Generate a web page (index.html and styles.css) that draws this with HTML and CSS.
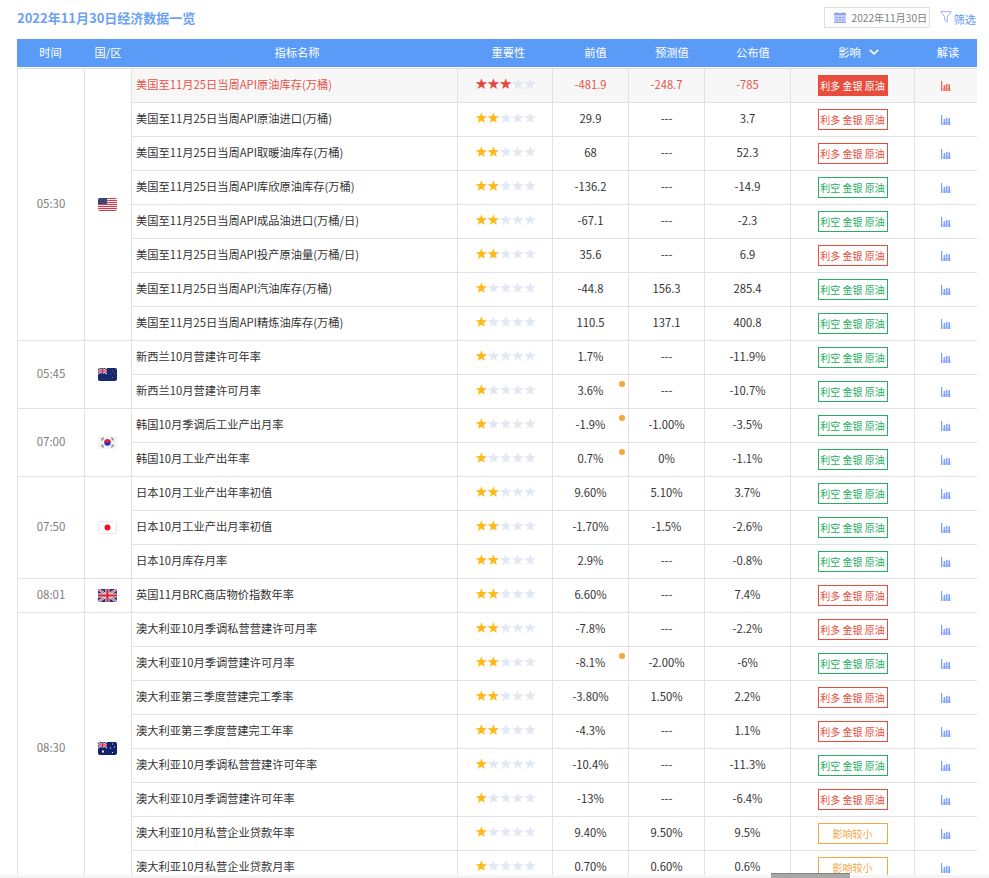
FILE: index.html
```html
<!DOCTYPE html>
<html lang="zh-CN">
<head>
    <meta charset="UTF-8">
    <title>经济数据一览</title>
    <link rel="stylesheet" href="styles.css">
</head>
<body>
<svg class="defs" width="0" height="0">
    <symbol id="chart" viewBox="0 0 10 10">
        <path d="M0 7H10V10H0Z" opacity=".35"/>
        <path d="M0 0H1.2V10H0ZM2.6 4H4.2V10H2.6ZM5 2.8H6.4V10H5ZM7.4 3.2H9V10H7.4Z"/>
    </symbol>
    <symbol id="us" viewBox="0 0 19 13">
        <rect width="19" height="13" fill="#f3e4e6"/>
        <path d="M0 .5H19M0 2.5H19M0 4.5H19M0 6.5H19M0 8.5H19M0 10.5H19M0 12.5H19" stroke="#c9404f" stroke-width="1"/>
        <rect width="9" height="6" fill="#3c4478"/>
    </symbol>
    <symbol id="nz" viewBox="0 0 19 13">
        <rect width="19" height="13" fill="#14296e"/>
        <path d="M0 0L9 6M9 0L0 6" stroke="#d9c6cf" stroke-width="1.2"/>
        <path d="M4.5 0V6M0 3H9" stroke="#d9c6cf" stroke-width="2"/>
        <path d="M4.5 0V6M0 3H9" stroke="#d1283c" stroke-width="1"/>
        <path d="M14 2.5h1v1h-1zM12 5.5h1v1h-1zM16 5h1v1h-1zM14 9h1v1h-1z" fill="#d1394a"/>
    </symbol>
    <symbol id="kr" viewBox="0 0 19 13">
        <rect width="19" height="13" fill="#f4f4f6"/>
        <path d="M3 3.5L5.5 1.5M3.5 4.5L6 2.5M13.5 1.5L16 3.5M13 2.5L15.5 4.5M3 9.5L5.5 11.5M3.5 8.5L6 10.5M13.5 11.5L16 9.5M13 10.5L15.5 8.5" stroke="#666" stroke-width=".8"/>
        <circle cx="9.5" cy="6.5" r="3.2" fill="#1f2fe0"/>
        <path d="M6.3 6.5a3.2 3.2 0 0 1 6.4 0z" fill="#e8202a"/>
    </symbol>
    <symbol id="jp" viewBox="0 0 19 13">
        <rect x=".5" y=".5" width="18" height="12" rx="1.5" fill="#fff" stroke="#e9e9ec"/>
        <circle cx="9.5" cy="6.5" r="3" fill="#f0141e"/>
    </symbol>
    <symbol id="gb" viewBox="0 0 19 13">
        <rect width="19" height="13" fill="#26307c"/>
        <path d="M0 0L19 13M19 0L0 13" stroke="#e9dfe6" stroke-width="2.4"/>
        <path d="M0 0L19 13M19 0L0 13" stroke="#d0384c" stroke-width=".9"/>
        <path d="M9.5 0V13M0 6.5H19" stroke="#f0e6ea" stroke-width="4"/>
        <path d="M9.5 0V13M0 6.5H19" stroke="#d9202e" stroke-width="2.2"/>
    </symbol>
    <symbol id="au" viewBox="0 0 19 13">
        <rect width="19" height="13" fill="#14226e"/>
        <path d="M0 0L9 6M9 0L0 6" stroke="#d9c6cf" stroke-width="1.2"/>
        <path d="M4.5 0V6M0 3H9" stroke="#d9c6cf" stroke-width="2"/>
        <path d="M4.5 0V6M0 3H9" stroke="#d1283c" stroke-width="1"/>
        <path d="M4 8.5h2v2H4zM14 1.5h1v1h-1zM16 4.5h1v1h-1zM12 5.5h1v1h-1zM14 10h1v1h-1z" fill="#e8e8f0"/>
    </symbol>
</svg>

<div class="page">
    <div class="top">
        <h1 class="title">2022年11月30日经济数据一览</h1>
        <div class="tools">
            <div class="date">
                <svg class="date-icon" viewBox="0 0 12 11"><path fill="#c3cdfa" d="M0 3H12V11H0Z"/><path fill="#8ea4f2" d="M0 1H2V0H3V1H9V0H10V1H12V3H0ZM0 10H12V11H0ZM2 5H3.5V6.2H2ZM5.2 5H6.8V6.2H5.2ZM8.5 5H10V6.2H8.5ZM2 7.6H3.5V8.8H2ZM5.2 7.6H6.8V8.8H5.2ZM8.5 7.6H10V8.8H8.5Z"/></svg>
                <span>2022年11月30日</span>
            </div>
            <div class="filter">
                <svg class="filter-icon" viewBox="0 0 12 12"><path fill="none" stroke="#a3aef5" d="M.7.7H11.3L7.3 5.6V11L4.7 9.4V5.6Z"/></svg>
                <span>筛选</span>
            </div>
        </div>
    </div>

    <div class="head">
        <div>时间</div>
        <div>国/区</div>
        <div>指标名称</div>
        <div>重要性</div>
        <div>前值</div>
        <div>预测值</div>
        <div>公布值</div>
        <div>影响<svg class="chevron" viewBox="0 0 10 6"><path d="M.8.8L5 4.8 9.2.8" fill="none" stroke="#fff" stroke-width="1.6"/></svg></div>
        <div>解读</div>
    </div>

    <table class="list">
        <colgroup>
            <col class="c-time"><col class="c-area"><col class="c-name"><col class="c-star"><col class="c-val"><col class="c-val"><col class="c-pub"><col class="c-tag"><col class="c-read">
        </colgroup>
        <tr class="hot">
            <td class="time" rowspan="8">05:30</td>
            <td class="area" rowspan="8"><svg class="flag"><use href="#us"/></svg></td>
            <td class="name">美国至11月25日当周API原油库存(万桶)</td>
            <td class="stars"><b class="red">★★★</b>★★</td>
            <td>-481.9</td><td>-248.7</td><td>-785</td>
            <td><span class="tag tag-full">利多 金银 原油</span></td>
            <td class="read"><svg class="chart chart-red"><use href="#chart"/></svg></td>
        </tr>
        <tr>
            <td class="name">美国至11月25日当周API原油进口(万桶)</td>
            <td class="stars"><b>★★</b>★★★</td>
            <td>29.9</td><td>---</td><td>3.7</td>
            <td><span class="tag tag-up">利多 金银 原油</span></td>
            <td class="read"><svg class="chart"><use href="#chart"/></svg></td>
        </tr>
        <tr>
            <td class="name">美国至11月25日当周API取暖油库存(万桶)</td>
            <td class="stars"><b>★★</b>★★★</td>
            <td>68</td><td>---</td><td>52.3</td>
            <td><span class="tag tag-up">利多 金银 原油</span></td>
            <td class="read"><svg class="chart"><use href="#chart"/></svg></td>
        </tr>
        <tr>
            <td class="name">美国至11月25日当周API库欣原油库存(万桶)</td>
            <td class="stars"><b>★★</b>★★★</td>
            <td>-136.2</td><td>---</td><td>-14.9</td>
            <td><span class="tag tag-down">利空 金银 原油</span></td>
            <td class="read"><svg class="chart"><use href="#chart"/></svg></td>
        </tr>
        <tr>
            <td class="name">美国至11月25日当周API成品油进口(万桶/日)</td>
            <td class="stars"><b>★★</b>★★★</td>
            <td>-67.1</td><td>---</td><td>-2.3</td>
            <td><span class="tag tag-down">利空 金银 原油</span></td>
            <td class="read"><svg class="chart"><use href="#chart"/></svg></td>
        </tr>
        <tr>
            <td class="name">美国至11月25日当周API投产原油量(万桶/日)</td>
            <td class="stars"><b>★★</b>★★★</td>
            <td>35.6</td><td>---</td><td>6.9</td>
            <td><span class="tag tag-up">利多 金银 原油</span></td>
            <td class="read"><svg class="chart"><use href="#chart"/></svg></td>
        </tr>
        <tr>
            <td class="name">美国至11月25日当周API汽油库存(万桶)</td>
            <td class="stars"><b>★</b>★★★★</td>
            <td>-44.8</td><td>156.3</td><td>285.4</td>
            <td><span class="tag tag-down">利空 金银 原油</span></td>
            <td class="read"><svg class="chart"><use href="#chart"/></svg></td>
        </tr>
        <tr>
            <td class="name">美国至11月25日当周API精炼油库存(万桶)</td>
            <td class="stars"><b>★</b>★★★★</td>
            <td>110.5</td><td>137.1</td><td>400.8</td>
            <td><span class="tag tag-down">利空 金银 原油</span></td>
            <td class="read"><svg class="chart"><use href="#chart"/></svg></td>
        </tr>

        <tr>
            <td class="time" rowspan="2">05:45</td>
            <td class="area" rowspan="2"><svg class="flag"><use href="#nz"/></svg></td>
            <td class="name">新西兰10月营建许可年率</td>
            <td class="stars"><b>★</b>★★★★</td>
            <td>1.7%</td><td>---</td><td>-11.9%</td>
            <td><span class="tag tag-down">利空 金银 原油</span></td>
            <td class="read"><svg class="chart"><use href="#chart"/></svg></td>
        </tr>
        <tr>
            <td class="name">新西兰10月营建许可月率</td>
            <td class="stars"><b>★</b>★★★★</td>
            <td class="revised">3.6%</td><td>---</td><td>-10.7%</td>
            <td><span class="tag tag-down">利空 金银 原油</span></td>
            <td class="read"><svg class="chart"><use href="#chart"/></svg></td>
        </tr>

        <tr>
            <td class="time" rowspan="2">07:00</td>
            <td class="area" rowspan="2"><svg class="flag"><use href="#kr"/></svg></td>
            <td class="name">韩国10月季调后工业产出月率</td>
            <td class="stars"><b>★</b>★★★★</td>
            <td class="revised">-1.9%</td><td>-1.00%</td><td>-3.5%</td>
            <td><span class="tag tag-down">利空 金银 原油</span></td>
            <td class="read"><svg class="chart"><use href="#chart"/></svg></td>
        </tr>
        <tr>
            <td class="name">韩国10月工业产出年率</td>
            <td class="stars"><b>★</b>★★★★</td>
            <td class="revised">0.7%</td><td>0%</td><td>-1.1%</td>
            <td><span class="tag tag-down">利空 金银 原油</span></td>
            <td class="read"><svg class="chart"><use href="#chart"/></svg></td>
        </tr>

        <tr>
            <td class="time" rowspan="3">07:50</td>
            <td class="area" rowspan="3"><svg class="flag"><use href="#jp"/></svg></td>
            <td class="name">日本10月工业产出年率初值</td>
            <td class="stars"><b>★★</b>★★★</td>
            <td>9.60%</td><td>5.10%</td><td>3.7%</td>
            <td><span class="tag tag-down">利空 金银 原油</span></td>
            <td class="read"><svg class="chart"><use href="#chart"/></svg></td>
        </tr>
        <tr>
            <td class="name">日本10月工业产出月率初值</td>
            <td class="stars"><b>★★</b>★★★</td>
            <td>-1.70%</td><td>-1.5%</td><td>-2.6%</td>
            <td><span class="tag tag-down">利空 金银 原油</span></td>
            <td class="read"><svg class="chart"><use href="#chart"/></svg></td>
        </tr>
        <tr>
            <td class="name">日本10月库存月率</td>
            <td class="stars"><b>★★</b>★★★</td>
            <td>2.9%</td><td>---</td><td>-0.8%</td>
            <td><span class="tag tag-down">利空 金银 原油</span></td>
            <td class="read"><svg class="chart"><use href="#chart"/></svg></td>
        </tr>

        <tr>
            <td class="time">08:01</td>
            <td class="area"><svg class="flag"><use href="#gb"/></svg></td>
            <td class="name">英国11月BRC商店物价指数年率</td>
            <td class="stars"><b>★★</b>★★★</td>
            <td>6.60%</td><td>---</td><td>7.4%</td>
            <td><span class="tag tag-up">利多 金银 原油</span></td>
            <td class="read"><svg class="chart"><use href="#chart"/></svg></td>
        </tr>

        <tr>
            <td class="time" rowspan="8">08:30</td>
            <td class="area" rowspan="8"><svg class="flag"><use href="#au"/></svg></td>
            <td class="name">澳大利亚10月季调私营营建许可月率</td>
            <td class="stars"><b>★★</b>★★★</td>
            <td>-7.8%</td><td>---</td><td>-2.2%</td>
            <td><span class="tag tag-up">利多 金银 原油</span></td>
            <td class="read"><svg class="chart"><use href="#chart"/></svg></td>
        </tr>
        <tr>
            <td class="name">澳大利亚10月季调营建许可月率</td>
            <td class="stars"><b>★★</b>★★★</td>
            <td class="revised">-8.1%</td><td>-2.00%</td><td>-6%</td>
            <td><span class="tag tag-down">利空 金银 原油</span></td>
            <td class="read"><svg class="chart"><use href="#chart"/></svg></td>
        </tr>
        <tr>
            <td class="name">澳大利亚第三季度营建完工季率</td>
            <td class="stars"><b>★★</b>★★★</td>
            <td>-3.80%</td><td>1.50%</td><td>2.2%</td>
            <td><span class="tag tag-up">利多 金银 原油</span></td>
            <td class="read"><svg class="chart"><use href="#chart"/></svg></td>
        </tr>
        <tr>
            <td class="name">澳大利亚第三季度营建完工年率</td>
            <td class="stars"><b>★★</b>★★★</td>
            <td>-4.3%</td><td>---</td><td>1.1%</td>
            <td><span class="tag tag-up">利多 金银 原油</span></td>
            <td class="read"><svg class="chart"><use href="#chart"/></svg></td>
        </tr>
        <tr>
            <td class="name">澳大利亚10月季调私营营建许可年率</td>
            <td class="stars"><b>★</b>★★★★</td>
            <td>-10.4%</td><td>---</td><td>-11.3%</td>
            <td><span class="tag tag-down">利空 金银 原油</span></td>
            <td class="read"><svg class="chart"><use href="#chart"/></svg></td>
        </tr>
        <tr>
            <td class="name">澳大利亚10月季调营建许可年率</td>
            <td class="stars"><b>★</b>★★★★</td>
            <td>-13%</td><td>---</td><td>-6.4%</td>
            <td><span class="tag tag-up">利多 金银 原油</span></td>
            <td class="read"><svg class="chart"><use href="#chart"/></svg></td>
        </tr>
        <tr>
            <td class="name">澳大利亚10月私营企业贷款年率</td>
            <td class="stars"><b>★</b>★★★★</td>
            <td>9.40%</td><td>9.50%</td><td>9.5%</td>
            <td><span class="tag tag-small">影响较小</span></td>
            <td class="read"><svg class="chart"><use href="#chart"/></svg></td>
        </tr>
        <tr>
            <td class="name">澳大利亚10月私营企业贷款月率</td>
            <td class="stars"><b>★</b>★★★★</td>
            <td>0.70%</td><td>0.60%</td><td>0.6%</td>
            <td><span class="tag tag-small">影响较小</span></td>
            <td class="read"><svg class="chart"><use href="#chart"/></svg></td>
        </tr>
    </table>
</div>

<div class="scrollbar"><div class="scrollbar-thumb"></div></div>
</body>
</html>
```

FILE: styles.css
```css
html, body {
    margin: 0;
    padding: 0;
    height: 878px;
    overflow: hidden;
    background: #ffffff;
}
body {
    font-family: "Noto Sans CJK SC", "Liberation Sans", sans-serif;
    font-size: 11.25px;
    color: #333333;
}
.defs {
    position: absolute;
}
.page {
    width: 960px;
    height: 878px;
    padding-left: 17px;
    overflow: hidden;
}

.top {
    display: flex;
    justify-content: space-between;
    height: 39px;
}
.title {
    margin: 0;
    font-size: 13px;
    font-weight: bold;
    line-height: 36px;
    color: #6ba1f5;
}
.tools {
    display: flex;
    align-items: flex-start;
    padding: 7px 1px 0 0;
}
.date {
    display: flex;
    align-items: center;
    gap: 5px;
    box-sizing: border-box;
    width: 106px;
    height: 21px;
    padding-left: 9px;
    border: #e0e0e0 solid 1px;
    font-size: 10.2px;
    color: #808080;
    white-space: nowrap;
}
.date-icon {
    flex-shrink: 0;
    width: 12px;
    height: 11px;
}
.filter {
    display: flex;
    align-items: flex-start;
    margin-left: 10px;
    color: #5f9af5;
}
.filter-icon {
    width: 12px;
    height: 12px;
    margin-top: 4px;
}
.filter span {
    margin: 4px 0 0 1px;
    line-height: 16px;
}

.head {
    display: grid;
    grid-template-columns: 67px 48px 330px 93px 81px 72px 90px 121px 58px;
    height: 28px;
    margin-bottom: 1px;
    line-height: 27px;
    text-align: center;
    color: #ffffff;
    background: #5b9bf8;
}
.chevron {
    width: 10px;
    height: 6px;
    margin: 0 0 2px 8px;
}

.list {
    width: 960px;
    table-layout: fixed;
    border-collapse: collapse;
}
.c-time { width: 67px; }
.c-area { width: 47px; }
.c-name { width: 326px; }
.c-star { width: 95px; }
.c-val { width: 76px; }
.c-pub { width: 86px; }
.c-tag { width: 124px; }
.c-read { width: 63px; }

.list td {
    height: 30px;
    padding: 0 0 3px 0;
    border: #dfe2e8 solid 1px;
    text-align: center;
    position: relative;
}
.list td.name {
    padding-left: 4px;
    text-align: left;
    white-space: nowrap;
}
.list td.time {
    font-size: 11.5px;
    color: #7d7d7d;
}
.list td.area, .list td.read {
    padding-right: 1px;
}
.hot td {
    background: #f7f7f7;
    color: #e8534a;
}
.hot td.time, .hot td.area {
    background: #ffffff;
    color: #7d7d7d;
}

.flag {
    display: block;
    width: 19px;
    height: 13px;
    margin: 3px auto 0 auto;
    border-radius: 2px;
}
.list td.stars {
    font-family: "DejaVu Sans", sans-serif;
    font-size: 15px;
    letter-spacing: -1.3px;
    text-rendering: geometricPrecision;
    color: #e3e7f2;
}
.stars b {
    font-weight: normal;
    color: #fdb913;
}
.stars b.red {
    color: #e8473f;
}

/* 前值被修正时右上角的小圆点 */
.revised::after {
    content: "";
    position: absolute;
    top: 6px;
    right: 3px;
    width: 6px;
    height: 6px;
    border-radius: 3px;
    background: #f9a63a;
}

.tag {
    display: block;
    box-sizing: border-box;
    width: 70px;
    height: 21px;
    margin: 3px auto 0 auto;
    border: solid 1px;
    font-size: 10px;
    line-height: 19px;
    white-space: nowrap;
}
.tag-full {
    color: #ffffff;
    border-color: #e74c3c;
    background: #e74c3c;
}
.tag-up {
    color: #e74c3c;
    border-color: #e74c3c;
}
.tag-down {
    color: #27ae60;
    border-color: #27ae60;
}
.tag-small {
    color: #f5a63c;
    border-color: #f5a63c;
}

.chart {
    display: block;
    width: 10px;
    height: 10px;
    margin: 4px auto 0 auto;
    fill: #7f9ffc;
}
.chart-red {
    fill: #e8655c;
}

.scrollbar {
    position: absolute;
    left: 0;
    right: 0;
    top: 875px;
    height: 3px;
    background: #f5f5f5;
}
.scrollbar-thumb {
    position: absolute;
    left: 771px;
    top: -2px;
    width: 79px;
    height: 5px;
    border-top: #808080 solid 1px;
    box-sizing: border-box;
    background: #a8a8a8;
}
```
